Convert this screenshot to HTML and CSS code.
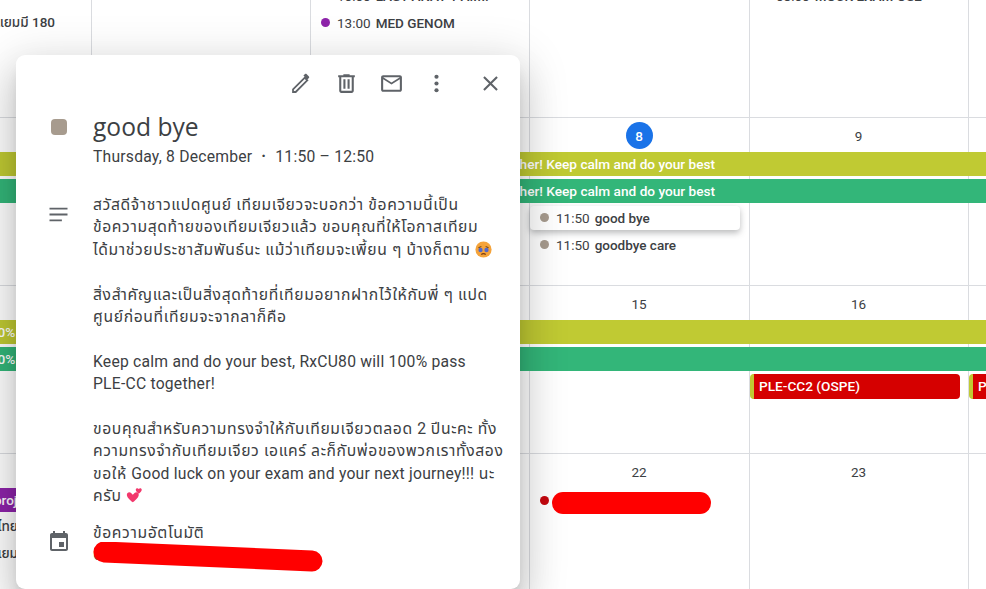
FILE: index.html
```html
<!DOCTYPE html>
<html lang="th">
<head>
<meta charset="utf-8">
<title>good bye</title>
<link rel="stylesheet" href="styles.css">
</head>
<body>
<main class="calendar">
  <section class="week">
    <i class="line c1"></i><i class="line c2"></i><i class="line c3"></i><i class="line c4"></i><i class="line c5"></i>
    <div class="event r1 c1 end">สอบ PHARM 301</div>
    <div class="event r2 c1 end">เยี่ยมชมแยมมี 180</div>
    <div class="event r1 c3 indent"><span class="time">10:00</span><b>LAST ANAT 1 A.M.</b></div>
    <div class="event r2 c3"><span class="dot purple"></span><span class="time">13:00</span><b>MED GENOM</b></div>
    <div class="event r1 c5 indent"><span class="time">08:00</span><b>MOCK EXAM OS2</b></div>
  </section>

  <section class="week">
    <i class="line c1"></i><i class="line c2"></i><i class="line c3"></i><i class="line c4"></i><i class="line c5"></i>
    <div class="date c4"><span class="today">8</span></div>
    <div class="date c5">9</div>
    <div class="bar olive r1 span-all pad-wk2">RxCU80 will 100% pass PLE-CC together! Keep calm and do your best</div>
    <div class="bar green r2 span-all pad-wk2">RxCU80 will 100% pass PLE-CC together! Keep calm and do your best</div>
    <div class="event r3 c4 chip"><span class="dot taupe"></span><span class="time">11:50</span><b>good bye</b></div>
    <div class="event r4 c4"><span class="dot taupe"></span><span class="time">11:50</span><b>goodbye care</b></div>
  </section>

  <section class="week">
    <i class="line c1"></i><i class="line c2"></i><i class="line c3"></i><i class="line c4"></i><i class="line c5"></i>
    <div class="date c4">15</div>
    <div class="date c5">16</div>
    <div class="bar olive r1 span-all pad-wk3">RxCU80 will 100% pass PLE-CC together!</div>
    <div class="bar green r2 span-all pad-wk3">RxCU80 will 100% pass PLE-CC together!</div>
    <div class="block r3 c5">PLE-CC2 (OSPE)</div>
    <div class="block r3 c6">PLE-CC2 (OSPE)</div>
  </section>

  <section class="week last">
    <i class="line c1"></i><i class="line c2"></i><i class="line c3"></i><i class="line c4"></i><i class="line c5"></i>
    <div class="date c4">22</div>
    <div class="date c5">23</div>
    <div class="tag r1 c1">project</div>
    <div class="event r2 c1 end near">วิชาไทย</div>
    <div class="event r3 c1 end near">เยี่ยมแยม</div>
    <div class="event r1 c4 hidden-event"><span class="dot red"></span><span class="scribble"></span></div>
  </section>
</main>

<article class="popup">
  <header class="toolbar">
    <button class="tool" aria-label="Edit"><svg viewBox="0 0 24 24"><path d="M3 21v-3.750L15.060 5.190l3.750 3.750L6.750 21H3zm1.700-1.700h1.350L16.400 8.940l-1.340-1.340L4.700 17.950V19.300zM17.600 8.150l-3.750-3.750 1.550-1.550c.4-.4 1.030-.4 1.420 0l2.330 2.330c.4.39.4 1.020 0 1.420L17.600 8.150z"/></svg></button>
    <button class="tool" aria-label="Delete"><svg viewBox="0 0 24 24"><path d="M15 4V3H9v1H4v2h1v13c0 1.100.9 2 2 2h10c1.100 0 2-.9 2-2V6h1V4h-5zm2 15H7V6h10v13zM9 8h2v9H9V8zm4 0h2v9h-2V8z"/></svg></button>
    <button class="tool" aria-label="Email"><svg viewBox="0 0 24 24"><path d="M20 4H4c-1.100 0-2 .9-2 2v12c0 1.100.9 2 2 2h16c1.100 0 2-.9 2-2V6c0-1.100-.9-2-2-2zm0 14H4V8l8 5 8-5v10zm-8-7L4 6h16l-8 5z"/></svg></button>
    <button class="tool" aria-label="Options"><svg viewBox="0 0 24 24"><circle cx="12" cy="5.500" r="2"/><circle cx="12" cy="12" r="2"/><circle cx="12" cy="18.500" r="2"/></svg></button>
    <button class="tool close" aria-label="Close"><svg viewBox="0 0 24 24"><path d="M19 6.410 17.590 5 12 10.590 6.410 5 5 6.410 10.590 12 5 17.590 6.410 19 12 13.410 17.590 19 19 17.590 13.410 12z"/></svg></button>
  </header>

  <div class="row heading">
    <div class="gutter"><span class="swatch"></span></div>
    <div>
      <h1 class="title">good bye</h1>
      <p class="when">Thursday, 8 December<span class="sep">·</span>11:50 – 12:50</p>
    </div>
  </div>

  <div class="row description">
    <div class="gutter"><svg class="row-icon lines" viewBox="0 0 24 24"><path d="M4 6h16v1.600H4zM4 11.200h16v1.600H4zM4 16.400h11v1.600H4z"/></svg></div>
    <div class="body-text">
      <p>สวัสดีจ้าชาวแปดศูนย์ เทียมเจียวจะบอกว่า ข้อความนี้เป็น<br>ข้อความสุดท้ายของเทียมเจียวแล้ว ขอบคุณที่ให้โอกาสเทียม<br>ได้มาช่วยประชาสัมพันธ์นะ แม้ว่าเทียมจะเพี้ยน ๆ บ้างก็ตาม <svg class="emoji" viewBox="0 0 20 20"><circle cx="10" cy="10" r="9.500" fill="#f5a33a"/><path d="M4 8l3.500-1.500M16 8l-3.500-1.500" stroke="#7a4a12" stroke-width="1.200" fill="none"/><ellipse cx="6.500" cy="10.500" rx="2.500" ry="2.600" fill="#5468c8"/><ellipse cx="13.500" cy="10.500" rx="2.500" ry="2.600" fill="#5468c8"/><path d="M7.500 16c1-1.500 4-1.500 5 0" stroke="#7a3a10" stroke-width="1.500" fill="none"/></svg></p>
      <p>สิ่งสำคัญและเป็นสิ่งสุดท้ายที่เทียมอยากฝากไว้ให้กับพี่ ๆ แปด<br>ศูนย์ก่อนที่เทียมจะจากลาก็คือ</p>
      <p class="en">Keep calm and do your best, RxCU80 will 100% pass<br>PLE-CC together!</p>
      <p>ขอบคุณสำหรับความทรงจำให้กับเทียมเจียวตลอด <span class="en">2</span> ปีนะคะ ทั้ง<br>ความทรงจำกับเทียมเจียว เอแคร์ ละก็กับพ่อของพวกเราทั้งสอง<br>ขอให้ <span class="en">Good luck on your exam and your next journey!!!</span> นะ<br>ครับ <svg class="emoji" viewBox="0 0 20 20"><path d="M8 18C3 14 1 11.500 1 9c0-2.500 3-4 5-2 .8.700 1.500 1.500 2 2 .5-.5 1.200-1.300 2-2 2-2 5-.5 5 2 0 2.500-2 5-7 9z" fill="#f2386c"/><path d="M15 8c-2-1.700-3.500-3-3.500-4.800 0-1.700 2.200-2.400 3.500-.8 1.300-1.600 3.500-.9 3.500.8C18.500 5 17 6.300 15 8z" fill="#f2386c"/></svg></p>
    </div>
  </div>

  <div class="row source">
    <div class="gutter"><svg class="row-icon cal" viewBox="0 0 24 24"><path d="M17 12h-5v5h5v-5zM16 1v2H8V1H6v2H5c-1.110 0-2 .9-2 2v14c0 1.100.89 2 2 2h14c1.100 0 2-.9 2-2V5c0-1.100-.9-2-2-2h-1V1h-2zm3 18H5V8h14v11z" /></svg></div>
    <div class="source-text">
      <p>ข้อความอัตโนมัติ</p>
      <p>C</p>
      <svg class="redaction" viewBox="0 0 230 32"><path d="M11 10 219 19" stroke="#ff0000" stroke-width="21" stroke-linecap="round" fill="none"/></svg>
    </div>
  </div>
</article>
</body>
</html>
```

FILE: styles.css
```css
* { box-sizing: border-box; }

html, body {
  margin: 0;
  height: 589px;
  overflow: hidden;
  background: #fff;
}

body {
  position: relative;
  font-family: Roboto, "Noto Sans Thai", "Noto Sans", "DejaVu Sans", sans-serif;
  color: #3c4043;
}

.calendar {
  margin: -50px 0 0 -128px;
  width: 1114px;
}

.week {
  display: grid;
  grid-template-columns: 220px 219px 219px 220px 219px 17px;
  grid-template-rows: 34px repeat(4, 27px) 1fr;
  height: 168px;
  border-bottom: 1px solid #dadce0;
}

.week.last {
  grid-template-rows: 34px repeat(3, 27px) 1fr;
  height: 135px;
  border-bottom: 0;
}

.line { grid-row: 1 / -1; border-right: 1px solid #dadce0; }
.c1 { grid-column: 1; }
.c2 { grid-column: 2; }
.c3 { grid-column: 3; }
.c4 { grid-column: 4; }
.c5 { grid-column: 5; }
.c6 { grid-column: 6; }
.r1 { grid-row: 2; }
.r2 { grid-row: 3; }
.r3 { grid-row: 4; }
.r4 { grid-row: 5; }

.date {
  grid-row: 1;
  display: flex;
  align-items: center;
  justify-content: center;
  padding: 2px 2px 0 0;
  font-size: 13.500px;
}

.today {
  width: 27px;
  height: 27px;
  margin-top: -1px;
  border-radius: 50%;
  background: #1a73e8;
  color: #fff;
  font-weight: 500;
  display: flex;
  align-items: center;
  justify-content: center;
}

.bar {
  height: 24px;
  line-height: 24px;
  font-size: 13.650px;
  font-weight: 500;
  color: #fff;
  white-space: nowrap;
  overflow: hidden;
}
.span-all { grid-column: 1 / -1; }
.olive { background: #c0ca33; }
.green { background: #33b679; }
.pad-wk2 { padding-left: 421px; }
.pad-wk3 { padding-left: 34px; }

.event {
  height: 24px;
  display: flex;
  align-items: center;
  padding: 0 0 1px 10px;
  font-size: 13.500px;
  white-space: nowrap;
  margin-right: 9px;
}
.event b { font-weight: 500; margin-left: 5px; color: #3c4043; }
.indent { padding-left: 26px; }
.end { justify-content: flex-end; padding-right: 37px; margin-right: 0; font-weight: 500; }
.near { padding-right: 74px; }
.time { color: #3c4043; }

.chip {
  border-radius: 4px;
  box-shadow: 0 3px 6px rgba(60, 64, 67, .35);
  background: #fff;
  width: 210px;
}

.dot {
  width: 9px;
  height: 9px;
  border-radius: 50%;
  margin-right: 7px;
  flex: none;
}
.purple { background: #8e24aa; }
.taupe { background: #a79b8e; }
.red { background: #c5080f; margin-right: 3px; }

.hidden-event { padding: 0 0 0 10px; }
.scribble {
  width: 159px;
  height: 22px;
  margin-top: 6px;
  border-radius: 11px;
  background: #ff0000;
}

.block {
  height: 25px;
  line-height: 24px;
  margin-right: 9px;
  padding-left: 5px;
  border-left: 4px solid #c0ca33;
  border-radius: 4px;
  background: #d50000;
  color: #fff;
  font-size: 13.650px;
  font-weight: 500;
  white-space: nowrap;
  overflow: hidden;
}
.c6.block { margin-right: 0; border-radius: 4px 0 0 4px; }

.tag {
  background: #8e24aa;
  color: #fff;
  height: 24px;
  line-height: 24px;
  padding-left: 122px;
  font-size: 13.500px;
  font-weight: 500;
  border-radius: 4px;
}

.popup {
  position: absolute;
  left: 16px;
  top: 55px;
  width: 504px;
  height: 534px;
  background: #fff;
  border-radius: 9px;
  box-shadow: 0 24px 38px 3px rgba(0, 0, 0, .14), 0 9px 46px 8px rgba(0, 0, 0, .12), 0 11px 15px -7px rgba(0, 0, 0, .2);
  padding-top: 14px;
}

.toolbar {
  display: flex;
  justify-content: flex-end;
  padding-right: 7px;
  height: 28px;
}

.tool {
  border: 0;
  padding: 0;
  background: none;
  width: 45px;
  height: 28px;
  display: flex;
  align-items: center;
  justify-content: center;
  color: #5f6368;
}
.tool svg { width: 25px; height: 25px; fill: #5f6368; }
.close { width: 54px; padding-left: 9px; }

.row {
  display: grid;
  grid-template-columns: 77px 1fr;
  padding-right: 20px;
}

.gutter { display: flex; justify-content: center; padding-left: 9px; width: 77px; }

.heading { margin-top: 15px; }
.swatch {
  width: 16px;
  height: 16px;
  margin: 7px 0 0 -1px;
  border-radius: 4px;
  background: #a79b8e;
}
.title {
  margin: 0;
  font-family: "Open Sans", Roboto, sans-serif;
  font-size: 24.600px;
  font-weight: 400;
  line-height: 30px;
  color: #3c4043;
}
.when {
  margin: 4px 0 0;
  font-size: 15.700px;
  line-height: 22px;
  letter-spacing: .22px;
  color: #3c4043;
}
.sep { margin: 0 9px; font-weight: 700; }

.description { margin-top: 26px; }
.row-icon { width: 27px; height: 27px; fill: #5f6368; margin-left: -1px; }
.lines { margin-top: 7px; }
.body-text p {
  margin: 0 0 22.400px;
  font-size: 15.700px;
  line-height: 22.400px;
  letter-spacing: .62px;
  white-space: nowrap;
}
.body-text p:last-child { margin-bottom: 0; }
.body-text .en { letter-spacing: .22px; }

.emoji { width: 17px; height: 17px; vertical-align: -3px; }

.source { margin-top: 14px; }
.cal { width: 24px; height: 24px; margin-top: 8px; }
.source-text { position: relative; font-size: 15.700px; line-height: 22.400px; letter-spacing: .62px; }
.source-text p { margin: 0; }
.redaction {
  position: absolute;
  left: 0;
  top: 20px;
  width: 230px;
  height: 32px;
}
```
